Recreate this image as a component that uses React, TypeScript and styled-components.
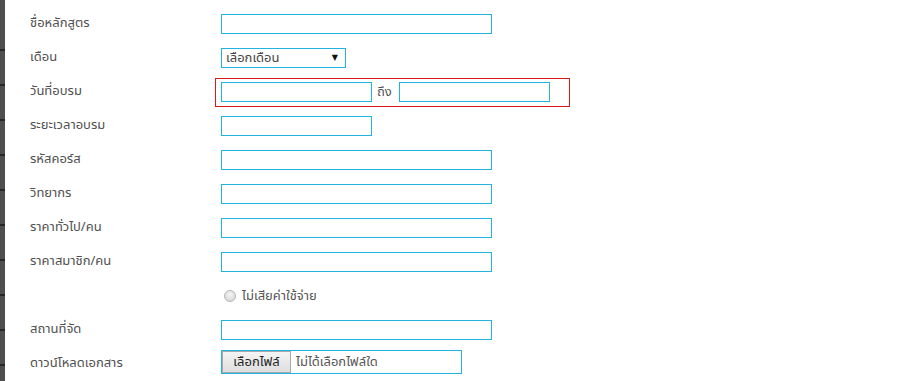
import React from "react";
import styled, { createGlobalStyle } from "styled-components";

const GlobalStyle = createGlobalStyle`
  html, body { margin: 0; padding: 0; background: #fff; }
  body { font-family: Tahoma, "Noto Sans Thai", "Noto Sans", "DejaVu Sans", sans-serif; }
`;

const Page = styled.div`
  display: flex;
  width: 910px;
  height: 381px;
  overflow: hidden;
  background: #fff;
`;

const Strip = styled.div`
  width: 5px;
  flex: none;
  display: flex;
  flex-direction: column;
  background: #4b4b4b;
`;

const StripSeg = styled.div<{ $h: number }>`
  height: ${(p) => p.$h}px;
  flex: none;
  box-sizing: border-box;
  background: #4e4e4e;
  border-bottom: 2px solid #262626;
`;

const Form = styled.div`
  flex: 1;
  padding: 7px 0 0 25px;
  display: flex;
  flex-direction: column;
`;

const Row = styled.div`
  display: grid;
  grid-template-columns: 185px 1fr;
  height: 34px;
  align-items: center;
`;

const Label = styled.div`
  font-size: 13px;
  color: #505050;
  margin-top: -2px;
`;

const Field = styled.div`
  display: flex;
  align-items: center;
  padding-left: 6px;
`;

const TextBox = styled.div<{ $w: number }>`
  width: ${(p) => p.$w}px;
  height: 20px;
  box-sizing: border-box;
  border: 1px solid #22b3e3;
  background: #fff;
`;

const Select = styled.div`
  width: 125px;
  height: 20px;
  box-sizing: border-box;
  border: 1px solid #22b3e3;
  display: flex;
  align-items: center;
  justify-content: space-between;
  padding: 0 7px 0 4px;
  font-size: 13px;
  color: #444;
`;

const Arrow = styled.span`
  font-size: 8px;
  color: #111;
`;

const DateGroup = styled.div`
  display: flex;
  align-items: center;
  margin-left: -6px;
  height: 29px;
  box-sizing: border-box;
  border: 1px solid #d81a1a;
  padding: 0 19px 0 5px;
  gap: 5px;
`;

const Between = styled.span`
  font-size: 13px;
  color: #555;
  margin-right: 2px;
`;

const RadioLine = styled.label`
  display: flex;
  align-items: center;
  gap: 6px;
  font-size: 13px;
  color: #555;
  margin-left: 3px;
  margin-top: -1px;
`;

const RadioDot = styled.span`
  width: 12px;
  height: 12px;
  box-sizing: border-box;
  border-radius: 50%;
  border: 1px solid #b5b5b5;
  background: radial-gradient(circle at 50% 35%, #f4f4f4 0%, #dcdcdc 70%, #cfcfcf 100%);
`;

const FileBox = styled.div`
  width: 241px;
  height: 24px;
  box-sizing: border-box;
  border: 1px solid #22b3e3;
  display: flex;
  align-items: stretch;
  margin-top: -4px;
`;

const FileButton = styled.div`
  box-sizing: border-box;
  width: 69px;
  border: 1px solid #a9a9a9;
  background: linear-gradient(#f4f4f4, #dedede);
  font-size: 13px;
  color: #222;
  display: flex;
  align-items: center;
  justify-content: center;
`;

const FileText = styled.div`
  font-size: 13px;
  color: #555;
  display: flex;
  align-items: center;
  padding-left: 5px;
`;

const segs = [51, 35, 35, 35, 35, 35, 35, 35, 35, 35, 35];

export default function App() {
  return (
    <>
      <GlobalStyle />
      <Page>
        <Strip>
          {segs.map((h, i) => (
            <StripSeg key={i} $h={h} />
          ))}
        </Strip>
        <Form>
          <Row>
            <Label>ชื่อหลักสูตร</Label>
            <Field><TextBox $w={271} /></Field>
          </Row>
          <Row>
            <Label>เดือน</Label>
            <Field>
              <Select>
                <span>เลือกเดือน</span>
                <Arrow>▼</Arrow>
              </Select>
            </Field>
          </Row>
          <Row>
            <Label>วันที่อบรม</Label>
            <Field>
              <DateGroup>
                <TextBox $w={151} />
                <Between>ถึง</Between>
                <TextBox $w={151} />
              </DateGroup>
            </Field>
          </Row>
          <Row>
            <Label>ระยะเวลาอบรม</Label>
            <Field><TextBox $w={151} /></Field>
          </Row>
          <Row>
            <Label>รหัสคอร์ส</Label>
            <Field><TextBox $w={271} /></Field>
          </Row>
          <Row>
            <Label>วิทยากร</Label>
            <Field><TextBox $w={271} /></Field>
          </Row>
          <Row>
            <Label>ราคาทั่วไป/คน</Label>
            <Field><TextBox $w={271} /></Field>
          </Row>
          <Row>
            <Label>ราคาสมาชิก/คน</Label>
            <Field><TextBox $w={271} /></Field>
          </Row>
          <Row>
            <Label />
            <Field>
              <RadioLine>
                <RadioDot />
                ไม่เสียค่าใช้จ่าย
              </RadioLine>
            </Field>
          </Row>
          <Row>
            <Label>สถานที่จัด</Label>
            <Field><TextBox $w={271} /></Field>
          </Row>
          <Row>
            <Label>ดาวน์โหลดเอกสาร</Label>
            <Field>
              <FileBox>
                <FileButton>เลือกไฟล์</FileButton>
                <FileText>ไม่ได้เลือกไฟล์ใด</FileText>
              </FileBox>
            </Field>
          </Row>
        </Form>
      </Page>
    </>
  );
}
